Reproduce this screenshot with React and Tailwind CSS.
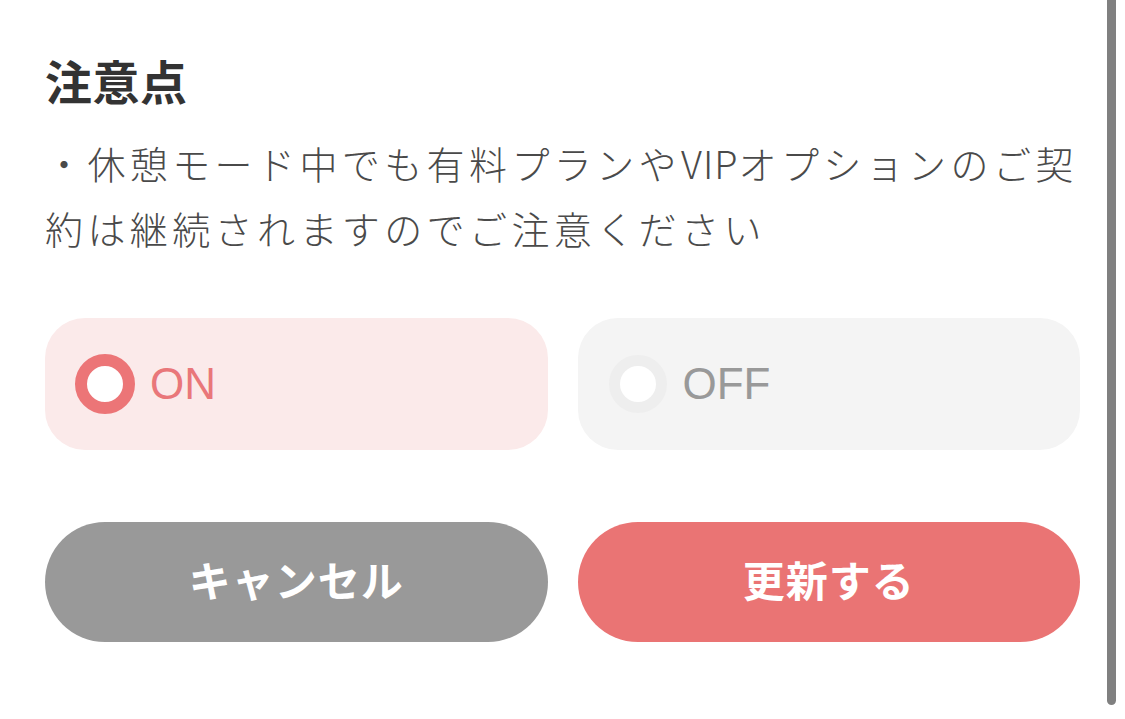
export default function App() {
  const jp = { fontFamily: '"Noto Sans CJK JP", "Noto Sans", sans-serif' };
  return (
    <div className="relative w-full h-[719px] bg-white overflow-hidden px-[45px]" style={jp}>
      <h2 className="pt-[57px] text-[47px] leading-[46px] font-bold tracking-[0.5px] text-[#333333]">注意点</h2>
      <p className="mt-[27px] text-[38px] leading-[65px] font-light tracking-[4.4px] text-[#4a4a4a] whitespace-nowrap">
        ・休憩モード中でも有料プランや<span className="tracking-[1px]">VIP</span>オプションのご契
        <br />
        約は継続されますのでご注意ください
      </p>

      <div className="mt-[58px] grid grid-cols-2 gap-[30px]">
        <div className="h-[132px] rounded-[40px] bg-[#fbeaea] flex items-center pl-[30px]">
          <div className="w-[60px] h-[60px] rounded-full border-[12px] border-[#ec7577] bg-white" />
          <span
            className="ml-[15px] text-[44px] leading-none text-[#e9777a]"
            style={{ fontFamily: '"Liberation Sans", Arial, sans-serif' }}
          >
            ON
          </span>
        </div>
        <div className="h-[132px] rounded-[40px] bg-[#f4f4f4] flex items-center pl-[31px]">
          <div className="w-[58px] h-[58px] rounded-full border-[11px] border-[#eeeeee] bg-white" />
          <span
            className="ml-[16px] text-[44px] leading-none text-[#999999]"
            style={{ fontFamily: '"Liberation Sans", Arial, sans-serif' }}
          >
            OFF
          </span>
        </div>
      </div>

      <div className="mt-[72px] grid grid-cols-2 gap-[30px]">
        <button className="h-[120px] rounded-full bg-[#999999] text-white text-[42px] leading-none font-bold tracking-[1px] flex items-center justify-center pb-[6px]">
          キャンセル
        </button>
        <button className="h-[120px] rounded-full bg-[#ea7474] text-white text-[42px] leading-none font-bold tracking-[1px] flex items-center justify-center pb-[6px]">
          更新する
        </button>
      </div>

      <div className="absolute right-[9px] top-[-12px] w-[9px] h-[717px] rounded-full bg-[#808080]" />
    </div>
  );
}
